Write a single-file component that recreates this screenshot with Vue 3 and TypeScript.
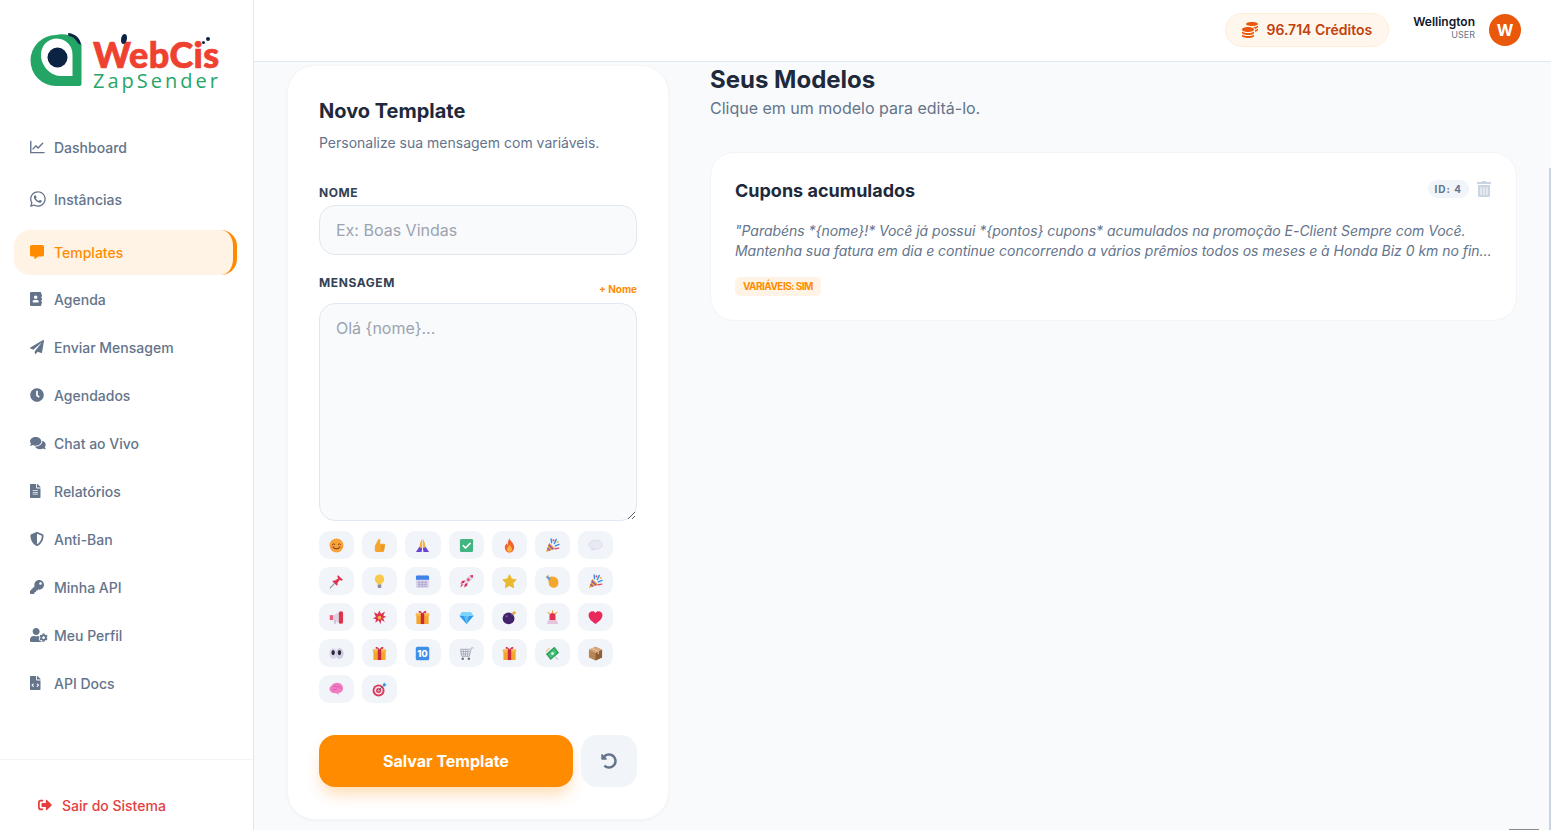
<script setup lang="ts">
interface Icon { vb: string; d: string }
const icons: Record<string, Icon> = {
  whatsapp: { vb: '0 0 448 512', d: 'M380.9 97.1C339 55.1 283.2 32 223.9 32c-122.4 0-222 99.6-222 222 0 39.1 10.2 77.3 29.6 111L0 480l117.7-30.9c32.4 17.7 68.9 27 106.1 27h.1c122.3 0 224.1-99.6 224.1-222 0-59.3-25.2-115-67.1-157zm-157 341.6c-33.2 0-65.7-8.9-94-25.7l-6.7-4-69.8 18.3L72 359.2l-4.4-7c-18.5-29.4-28.2-63.3-28.2-98.2 0-101.7 82.8-184.5 184.6-184.5 49.3 0 95.6 19.2 130.4 54.1 34.8 34.9 56.2 81.2 56.1 130.5 0 101.8-84.9 184.6-186.6 184.6zm101.2-138.2c-5.5-2.8-32.8-16.2-37.9-18-5.1-1.9-8.8-2.8-12.5 2.8-3.7 5.6-14.3 18-17.6 21.8-3.2 3.7-6.5 4.2-12 1.4-32.6-16.3-54-29.1-75.5-66-5.7-9.8 5.7-9.1 16.3-30.3 1.8-3.7.9-6.9-.5-9.7-1.4-2.8-12.5-30.1-17.1-41.2-4.5-10.8-9.1-9.3-12.5-9.5-3.2-.2-6.9-.2-10.6-.2-3.7 0-9.7 1.4-14.8 6.9-5.1 5.6-19.4 19-19.4 46.3 0 27.3 19.9 53.7 22.6 57.4 2.8 3.7 39.1 59.7 94.8 83.8 35.2 15.2 49 16.5 66.6 13.9 10.7-1.6 32.8-13.4 37.4-26.4 4.6-13 4.6-24.1 3.2-26.4-1.3-2.5-5-3.9-10.5-6.6z' },
  comment: { vb: '0 0 512 512', d: 'M448 0H64C28.7 0 0 28.7 0 64v288c0 35.3 28.7 64 64 64h96v84c0 9.8 11.2 15.5 19.1 9.7L304 416h144c35.3 0 64-28.7 64-64V64c0-35.3-28.7-64-64-64z' },
  book: { vb: '0 0 448 512', d: 'M436 160c6.6 0 12-5.4 12-12v-40c0-6.6-5.4-12-12-12h-20V48c0-26.5-21.5-48-48-48H48C21.5 0 0 21.5 0 48v416c0 26.5 21.5 48 48 48h320c26.5 0 48-21.5 48-48v-48h20c6.6 0 12-5.4 12-12v-40c0-6.6-5.4-12-12-12h-20v-64h20c6.6 0 12-5.4 12-12v-40c0-6.6-5.4-12-12-12h-20v-64h20zm-228-32c35.3 0 64 28.7 64 64s-28.7 64-64 64-64-28.7-64-64 28.7-64 64-64zm112 236c0 10.6-10 19.2-22.4 19.2H118.4C106 384 96 375.4 96 364.8v-19.2c0-31.8 30.1-57.6 67.2-57.6h5c12.3 5.1 25.7 8 39.8 8s27.6-2.9 39.8-8h5c37.1 0 67.2 25.8 67.2 57.6v19.2z' },
  plane: { vb: '0 0 512 512', d: 'M476 3.2L12.5 270.6c-18.1 10.4-15.8 35.6 2.2 43.2L121 358.4l287.3-253.2c5.5-4.9 13.3 2.6 8.6 8.3L176 407v80.5c0 23.6 28.5 32.9 42.5 15.8L282 426l124.6 52.2c14.2 6 30.4-2.9 33-18.2l72-432C515 7.8 493.3-6.8 476 3.2z' },
  clock: { vb: '0 0 512 512', d: 'M256,8C119,8,8,119,8,256S119,504,256,504,504,393,504,256,393,8,256,8Zm92.49,313h0l-20,25a16,16,0,0,1-22.49,2.5h0l-67-49.72a40,40,0,0,1-15-31.23V112a16,16,0,0,1,16-16h32a16,16,0,0,1,16,16V256l58,42.5A16,16,0,0,1,348.49,321Z' },
  comments: { vb: '0 0 576 512', d: 'M416 192c0-88.4-93.1-160-208-160S0 103.6 0 192c0 34.3 14.1 65.9 38 92-13.4 30.2-35.5 54.2-35.8 54.5-2.2 2.3-2.8 5.7-1.5 8.7S4.8 352 8 352c36.6 0 66.9-12.3 88.7-25 32.2 15.7 70.3 25 111.3 25 114.9 0 208-71.6 208-160zm122 220c23.9-26 38-57.7 38-92 0-66.9-53.5-124.2-129.3-148.1.9 6.6 1.3 13.3 1.3 20.1 0 105.9-107.7 192-240 192-10.8 0-21.3-.8-31.7-1.9C207.8 439.6 281.8 480 368 480c41 0 79.1-9.2 111.3-25 21.8 12.7 52.1 25 88.7 25 3.2 0 6.1-1.9 7.3-4.8 1.3-2.9.7-6.3-1.5-8.7-.3-.3-22.4-24.2-35.8-54.5z' },
  file: { vb: '0 0 384 512', d: 'M224 136V0H24C10.7 0 0 10.7 0 24v464c0 13.3 10.7 24 24 24h336c13.3 0 24-10.7 24-24V160H248c-13.2 0-24-10.8-24-24zm64 236c0 6.6-5.4 12-12 12H108c-6.6 0-12-5.4-12-12v-8c0-6.6 5.4-12 12-12h168c6.6 0 12 5.4 12 12v8zm0-64c0 6.6-5.4 12-12 12H108c-6.6 0-12-5.4-12-12v-8c0-6.6 5.4-12 12-12h168c6.6 0 12 5.4 12 12v8zm0-72v8c0 6.6-5.4 12-12 12H108c-6.6 0-12-5.4-12-12v-8c0-6.6 5.4-12 12-12h168c6.6 0 12 5.4 12 12zm96-114.1v6.1H256V0h6.1c6.4 0 12.5 2.5 17 7l97.9 98c4.5 4.5 7 10.6 7 16.9z' },
  shield: { vb: '0 0 512 512', d: 'M466.5 83.7l-192-80a48.15 48.15 0 0 0-36.9 0l-192 80C27.7 91.1 16 108.6 16 128c0 198.5 114.5 335.7 221.5 380.3 11.8 4.9 25.1 4.9 36.9 0C360.1 472.6 496 349.3 496 128c0-19.4-11.7-36.9-29.5-44.3zM256.1 446.3l-.1-381 175.9 73.3c-3.3 151.4-82.1 261.1-175.8 307.7z' },
  key: { vb: '0 0 512 512', d: 'M512 176.001C512 273.203 433.202 352 336 352c-11.22 0-22.19-1.062-32.827-3.069l-24.012 27.014A23.999 23.999 0 0 1 261.223 384H224v40c0 13.255-10.745 24-24 24h-40v40c0 13.255-10.745 24-24 24H24c-13.255 0-24-10.745-24-24v-78.059c0-6.365 2.529-12.47 7.029-16.971l161.802-161.802C163.108 213.814 160 195.271 160 176 160 78.798 238.797.001 335.999 0 433.488-.001 512 78.511 512 176.001zM336 128c0 26.51 21.49 48 48 48s48-21.49 48-48-21.49-48-48-48-48 21.49-48 48z' },
  usercog: { vb: '0 0 640 512', d: 'M610.5 373.3c2.6-14.1 2.6-28.5 0-42.6l25.8-14.9c3-1.7 4.3-5.2 3.3-8.5-6.7-21.6-18.2-41.2-33.2-57.4-2.3-2.5-6-3.1-9-1.4l-25.8 14.9c-10.9-9.3-23.4-16.5-36.9-21.3v-29.8c0-3.4-2.4-6.4-5.7-7.1-22.3-5-45-4.8-66.2 0-3.3.7-5.7 3.7-5.7 7.1v29.8c-13.5 4.8-26 12-36.9 21.3l-25.8-14.9c-2.9-1.7-6.7-1.1-9 1.4-15 16.2-26.5 35.8-33.2 57.4-1 3.3.4 6.8 3.3 8.5l25.8 14.9c-2.6 14.1-2.6 28.5 0 42.6l-25.8 14.9c-3 1.7-4.3 5.2-3.3 8.5 6.7 21.6 18.2 41.1 33.2 57.4 2.3 2.5 6 3.1 9 1.4l25.8-14.9c10.9 9.3 23.4 16.5 36.9 21.3v29.8c0 3.4 2.4 6.4 5.7 7.1 22.3 5 45 4.8 66.2 0 3.3-.7 5.7-3.7 5.7-7.1v-29.8c13.5-4.8 26-12 36.9-21.3l25.8 14.9c2.9 1.7 6.7 1.1 9-1.4 15-16.2 26.5-35.8 33.2-57.4 1-3.3-.4-6.8-3.3-8.5l-25.8-14.9zM496 400.5c-26.8 0-48.5-21.8-48.5-48.5s21.8-48.5 48.5-48.5 48.5 21.8 48.5 48.5-21.7 48.5-48.5 48.5zM224 256c70.7 0 128-57.3 128-128S294.7 0 224 0 96 57.3 96 128s57.3 128 128 128zm201.2 226.5c-2.3-1.2-4.6-2.6-6.8-3.9l-7.9 4.6c-6 3.4-12.8 5.3-19.6 5.3-10.9 0-21.4-4.6-28.9-12.6-18.3-19.8-32.3-43.9-40.2-69.6-5.5-17.7 1.9-36.4 17.9-45.7l7.9-4.6c-.1-2.6-.1-5.2 0-7.8l-7.9-4.6c-16-9.2-23.4-28-17.9-45.7.9-2.9 2.2-5.8 3.2-8.7-3.8-.3-7.5-1.2-11.4-1.2h-16.7c-22.2 10.2-46.9 16-72.9 16s-50.6-5.8-72.9-16h-16.7C60.2 288 0 348.2 0 422.4V464c0 26.5 21.5 48 48 48h352c10.1 0 19.5-3.2 27.2-8.5-1.2-3.8-2-7.7-2-11.8v-9.2z' },
  filecode: { vb: '0 0 384 512', d: 'M384 121.941V128H256V0h6.059c6.365 0 12.47 2.529 16.971 7.029l97.941 97.941A24.005 24.005 0 0 1 384 121.941zM248 160c-13.2 0-24-10.8-24-24V0H24C10.745 0 0 10.745 0 24v464c0 13.255 10.745 24 24 24h336c13.255 0 24-10.745 24-24V160H248zM123.206 400.505a5.4 5.4 0 0 1-7.633.246l-64.866-60.812a5.4 5.4 0 0 1 0-7.879l64.866-60.812a5.4 5.4 0 0 1 7.633.246l19.579 20.885a5.4 5.4 0 0 1-.372 7.747L101.65 336l40.763 35.874a5.4 5.4 0 0 1 .372 7.747l-19.579 20.884zm212.087-60.566l-64.866 60.812a5.4 5.4 0 0 1-7.633-.246l-19.58-20.885a5.4 5.4 0 0 1 .372-7.747L284.35 336l-40.763-35.874a5.4 5.4 0 0 1-.372-7.747l19.58-20.885a5.4 5.4 0 0 1 7.633-.246l64.866 60.812a5.4 5.4 0 0 1-.001 7.879z' },
  logout: { vb: '0 0 512 512', d: 'M497 273L329 441c-15 15-41 4.5-41-17v-96H152c-13.3 0-24-10.7-24-24v-96c0-13.3 10.7-24 24-24h136V88c0-21.4 25.9-32 41-17l168 168c9.3 9.4 9.3 24.6 0 34zM192 436v-40c0-6.6-5.4-12-12-12H96c-17.7 0-32-14.3-32-32V160c0-17.7 14.3-32 32-32h84c6.6 0 12-5.4 12-12V76c0-6.6-5.4-12-12-12H96c-53 0-96 43-96 96v192c0 53 43 96 96 96h84c6.6 0 12-5.4 12-12z' },
  coins: { vb: '0 0 512 512', d: 'M0 405.3V448c0 35.3 86 64 192 64s192-28.7 192-64v-42.7C342.7 434.4 267.2 448 192 448S41.3 434.4 0 405.3zM320 128c106 0 192-28.7 192-64S426 0 320 0 128 28.7 128 64s86 64 192 64zM0 300.4V352c0 35.3 86 64 192 64s192-28.7 192-64v-51.6c-41.3 34-116.9 51.6-192 51.6S41.3 334.4 0 300.4zm416 11c57.3-11.1 96-31.7 96-55.4v-42.7c-23.2 16.4-57.3 27.6-96 34.5v63.6zM192 160C86 160 0 195.8 0 240s86 80 192 80 192-35.8 192-80-86-80-192-80zm219.3 56.3c60-10.8 100.7-32 100.7-56.3v-42.7c-35.5 25.1-96.5 38.6-160.7 41.8 29.5 14.3 51.2 33.5 60 57.2z' },
  trash: { vb: '0 0 448 512', d: 'M32 464a48 48 0 0 0 48 48h288a48 48 0 0 0 48-48V128H32zm272-256a16 16 0 0 1 32 0v224a16 16 0 0 1-32 0zm-96 0a16 16 0 0 1 32 0v224a16 16 0 0 1-32 0zm-96 0a16 16 0 0 1 32 0v224a16 16 0 0 1-32 0zM432 32H312l-9.4-18.7A24 24 0 0 0 281.1 0H166.8a23.72 23.72 0 0 0-21.4 13.3L136 32H16A16 16 0 0 0 0 48v32a16 16 0 0 0 16 16h416a16 16 0 0 0 16-16V48a16 16 0 0 0-16-16z' },
  undo: { vb: '0 0 512 512', d: 'M255.545 8c-66.269.119-126.438 26.233-170.86 68.685L48.971 40.971C33.851 25.851 8 36.559 8 57.941V192c0 13.255 10.745 24 24 24h134.059c21.382 0 32.09-25.851 16.971-40.971l-41.75-41.75c30.864-28.899 70.801-44.907 113.23-45.273 92.398-.798 170.283 73.977 169.484 169.442C423.236 348.009 349.816 424 256 424c-41.127 0-79.997-14.678-110.63-41.556-4.743-4.161-11.906-3.908-16.368.553L89.34 422.659c-4.872 4.872-4.631 12.815.482 17.433C133.798 479.813 192.074 504 256 504c136.966 0 247.999-111.033 248-247.998C504.001 119.193 392.354 7.755 255.545 8z' },
}
const nav = [
  { label: 'Dashboard', icon: 'chart', wide: true },
  { label: 'Instâncias', icon: 'whatsapp', wide: true, size: 18 },
  { label: 'Templates', icon: 'comment', active: true },
  { label: 'Agenda', icon: 'book' },
  { label: 'Enviar Mensagem', icon: 'plane' },
  { label: 'Agendados', icon: 'clock' },
  { label: 'Chat ao Vivo', icon: 'comments' },
  { label: 'Relatórios', icon: 'file' },
  { label: 'Anti-Ban', icon: 'shield' },
  { label: 'Minha API', icon: 'key' },
  { label: 'Meu Perfil', icon: 'usercog' },
  { label: 'API Docs', icon: 'filecode' },
]
const gift = '<rect x="1.5" y="5" width="13" height="10" rx="1" fill="#f5a52b"/><rect x=".8" y="3.4" width="14.4" height="3.2" rx=".6" fill="#f7b84a"/><rect x="6.2" y="3.4" width="3.6" height="11.6" fill="#c9283e"/><path d="M8 3.4C6 .6 3.6.6 3.8 2.200 4 3.400 6 3.400 8 3.400zM8 3.400c2-2.800 4.400-2.800 4.200-1.200C12 3.400 10 3.400 8 3.400z" fill="#d8344c"/>'
const party = '<path d="M1 15 4.500 5l6.500 6.500z" fill="#e8a13a"/><path d="M2.600 10.800l2.600 2.700M3.900 7.200l4.900 4.900" stroke="#8a4fc4" stroke-width="1.400"/><path d="M7 5 6.500 1M10 6l2-4.500M11 8.500l4-1.700" stroke="#3e8ee8" stroke-width="1.500" stroke-linecap="round"/><circle cx="9" cy="2.500" r="1.100" fill="#e8456b"/><circle cx="13.500" cy="4.200" r="1.100" fill="#f2b632"/><path d="M11 11.500l3.700-.7" stroke="#e8456b" stroke-width="1.500" stroke-linecap="round"/>'
const emojis: string[] = [
  '<circle cx="8" cy="8" r="7.4" fill="#f7a23b"/><path d="M3.8 6.8q1.2-1.500 2.400 0M9.800 6.800q1.200-1.500 2.400 0" stroke="#7a3a14" stroke-width="1" fill="none" stroke-linecap="round"/><path d="M4.500 9.700q3.500 3.600 7 0" stroke="#7a3a14" stroke-width="1.100" fill="none" stroke-linecap="round"/><circle cx="3.700" cy="9.300" r="1.200" fill="#f0734a" opacity=".7"/><circle cx="12.300" cy="9.300" r="1.200" fill="#f0734a" opacity=".7"/>',
  '<path d="M3 8.500 7 1c1.800-.3 2.300 1 1.900 2.600L8.500 6H12.500c1.200 0 1.700 1 1.400 2l-1 5.800c-.2.800-.8 1.200-1.600 1.200H5c-1.200 0-2-1-2-2z" fill="#f4a62e"/><path d="M9.500 8.500h4M9.500 10.500h3.800M9.500 12.500h3.200" stroke="#d9801b" stroke-width=".7"/>',
  '<path d="M7.600 1C6 2.500 5 7 4.500 10l3.100 1zM8.400 1C10 2.500 11 7 11.500 10l-3.100 1z" fill="#f5b041"/><path d="M4.500 9.500 1 15h6l.6-4zM11.500 9.500 15 15H9l-.6-4z" fill="#6a45d1"/>',
  '<rect x="1" y="1" width="14" height="14" rx="1.500" fill="#43b581"/><path d="M4.500 8.200 7 10.700l4.800-5" stroke="#fff" stroke-width="1.700" fill="none" stroke-linecap="round" stroke-linejoin="round"/>',
  '<path d="M8 .5c.6 2.600 5 4.800 5 9.300 0 3.200-2.200 5.700-5 5.700s-5-2.500-5-5.700c0-2 1.200-3.400 2-4.300.1 1 .5 1.600 1.100 1.900C6 4.700 6.800 2.200 8 .5z" fill="#f2622e"/><path d="M8 7c.4 1.500 2.800 2.500 2.800 5 0 1.700-1.200 3-2.800 3s-2.800-1.300-2.800-3C5.200 10 7.500 8.700 8 7z" fill="#fbb03b"/>',
  party,
  '<ellipse cx="8" cy="7.200" rx="7.200" ry="5" fill="#e9e9f4" stroke="#cfcfe0" stroke-width=".6"/><path d="M4.500 10.500 3.500 14.500l4-3z" fill="#dcdcea"/>',
  '<path d="M9.500 1 15 6.500 13 7.200 11.500 6 9 9.500c.4 1.500 0 2.500-.6 3L3.500 7.600c.6-.6 1.700-1 3-.6L10 4.500 8.800 3.200z" fill="#e0314f"/><path d="M6 10 1.300 14.700" stroke="#8a94a6" stroke-width="1.200" stroke-linecap="round"/>',
  '<path d="M8 .5a5 5 0 0 0-2.800 9.100c.6.500.8 1 .8 1.800h4c0-.8.200-1.300.8-1.800A5 5 0 0 0 8 .5z" fill="#fbc94a"/><rect x="6.100" y="11.300" width="3.800" height="3.700" rx=".8" fill="#8d8da3"/>',
  '<rect x="1" y="1.500" width="14" height="13.500" rx="1.500" fill="#dcd6ee"/><path d="M2.500 1.500h11A1.500 1.500 0 0 1 15 3v3H1V3a1.500 1.500 0 0 1 1.500-1.500z" fill="#3f83e8"/><path d="M4.500 7.500v6M8 7.500v6M11.500 7.500v6M3 9h10M3 11h10M3 13h10" stroke="#9b90b8" stroke-width=".9" stroke-dasharray="1 .7"/>',
  '<path d="M15 1c-3.700.2-7 2.200-8.800 6.300L8.700 9.800C12.800 8 14.800 4.700 15 1z" fill="#dccde2"/><path d="M15 1c-1.300 0-2.500.3-3.500.7l2.800 2.800c.4-1 .7-2.200.7-3.500z" fill="#e0314f"/><circle cx="10" cy="6" r="1.300" fill="#e0314f"/><path d="M6.500 6.800 3.500 7.300 1.500 10.500l4-.8zM9.200 9.500l-.5 3-3.200 2 .8-4zM5 11 1.500 14.500l.8-3.300z" fill="#d92d5e"/>',
  '<path d="m8 .8 2.200 4.500 5 .8-3.600 3.500.8 5L8 12.200l-4.400 2.400.8-5L.8 6.100l5-.8z" fill="#e9b92e" stroke="#e9b92e" stroke-linejoin="round"/>',
  '<path d="M3.500 4c3-2.200 8-1.400 10 1.800 1.700 3.200.6 7.400-2.400 8.600-3.100 1-6-.5-7-3.500z" fill="#f5a62e"/><path d="M2.800 1.300 6 5.300 4.500 7.300 1 3.500z" fill="#5aa7e8"/><path d="M2.500 .8 4 2.300M.8 2.800 2.300 3.800" stroke="#f5a62e" stroke-width=".8"/>',
  party,
  '<rect x=".8" y="5.500" width="3.700" height="5.200" fill="#ef5d7d"/><path d="M4.500 5.500 11 2v12l-6.500-3.300z" fill="#dcd3e4"/><rect x="10.500" y="1.300" width="4.500" height="13.400" rx="2" fill="#e0314f"/><path d="M5 10.700h2l.8 4H5.800z" fill="#c7c1d4"/>',
  '<path d="m8 .5 1.500 3.800L14 1.600l-2 4.200 3.300 1.700-3.500 1 1.700 4.400-3.500-2.400-1 4.700-1.900-4.200-3.600 2.700.8-4L.8 9l3.300-1.800L2 2.500l4.100 1.700z" fill="#e0314f"/><circle cx="8" cy="8" r="2" fill="#f6b648"/>',
  gift,
  '<path d="M3.800 2h8.400L15.500 6.500 8 15 .5 6.500z" fill="#2f9be8"/><path d="M5.500 6.500 8 15l2.500-8.500z" fill="#5cc1f5"/><path d="M3.800 2h8.400l3.300 4.500H.5z" fill="#7ed4f8"/>',
  '<circle cx="7" cy="9" r="6.300" fill="#43226d"/><circle cx="5" cy="6.700" r="1.200" fill="#7a5aa8"/><path d="m10.500 5 1.500-1.500" stroke="#8a8aa0" stroke-width="1.600"/><circle cx="13" cy="3" r="1.800" fill="#f5a62e"/>',
  '<path d="M4.800 6.500a3.200 3.200 0 0 1 6.400 0V11H4.800z" fill="#e0314f"/><path d="M3.300 11h9.400l1.300 4H2z" fill="#e6c4de"/><path d="M8 .8v2.200M3.300 2.500 5 4.200M12.700 2.500 11 4.200" stroke="#f2a23a" stroke-width="1.100" stroke-linecap="round"/>',
  '<path d="M8 15C2.800 11.300.6 8.500.6 5.600.6 3 2.600 1.300 4.800 1.300 6.100 1.300 7.300 2 8 3.200c.7-1.200 1.900-1.900 3.200-1.900 2.200 0 4.200 1.700 4.200 4.300 0 2.900-2.200 5.700-7.400 9.400z" fill="#e9285b"/>',
  '<ellipse cx="4.600" cy="8" rx="4.200" ry="5.800" fill="#ddd8ea"/><ellipse cx="11.400" cy="8" rx="4.200" ry="5.800" fill="#d2cde2"/><ellipse cx="4.400" cy="7" rx="1.800" ry="2.800" fill="#2a2a3a"/><ellipse cx="11.200" cy="7" rx="1.800" ry="2.800" fill="#2a2a3a"/>',
  gift,
  '<rect x=".8" y=".8" width="14.400" height="14.400" rx="2" fill="#3f8fe8"/><text x="8" y="11.800" text-anchor="middle" font-family="Inter, sans-serif" font-weight="800" font-size="10" fill="#fff">10</text>',
  '<path d="M1 3.500h11M1 6h11M1.500 8.500h10M2 3.500 3 11h8l2.200-9H15.500" stroke="#a3a3b5" stroke-width=".9" fill="none"/><path d="M4.500 3.500 5.200 11M7 3.500V11M9.500 3.500 9 11" stroke="#a3a3b5" stroke-width=".8"/><circle cx="4" cy="13.500" r="1.300" fill="#6b6b80"/><circle cx="10.500" cy="13.500" r="1.300" fill="#6b6b80"/>',
  gift,
  '<path d="M1 8.500 10 .8l5 6.500L6 15z" fill="#2e9e5b"/><path d="M3 9 9.800 3l3.200 4L6.300 13z" fill="#48c078"/><circle cx="8" cy="8" r="1.500" fill="#d6f5dc"/><path d="M1 6 5 2" stroke="#e8c98a" stroke-width="1.500"/><path d="M11 11.500l3 3" stroke="#c8c8d6" stroke-width="1.300"/>',
  '<path d="M8 .7 15 4v8.300L8 15.500 1 12.300V4z" fill="#b98554"/><path d="M8 7.500 15 4v8.300L8 15.500z" fill="#8f6038"/><path d="M8 .7 15 4 8 7.500 1 4z" fill="#d4a679"/><path d="M4.500 2.400 11 6v2.500" stroke="#e7cda9" stroke-width="1" fill="none"/>',
  '<path d="M3 3.500c1.500-2.600 6.500-3.800 9.500-1.600 3 2 3.200 6.200 1 8.500-1 1-2.800 1.300-3.800 1.300l1.500 2.100-3.700-1.700C4.500 12.300.5 10.700.5 7.500.5 5.800 2 4.500 3 3.500z" fill="#f17cc2"/><path d="M5 5c1.500-1 3-.5 3.500 1M9 4.500c1.500-.5 3 .5 3 2.500M4 8c1.500.5 3 .5 4-.5" stroke="#c94d9c" stroke-width=".8" fill="none"/>',
  '<circle cx="7" cy="9" r="6.400" fill="#d93d5e"/><circle cx="7" cy="9" r="4.400" fill="#efdde8"/><circle cx="7" cy="9" r="2.700" fill="#d93d5e"/><circle cx="7" cy="9" r="1" fill="#efdde8"/><path d="M7 9 12.500 3.500" stroke="#5a6078" stroke-width="1"/><path d="M11.500 2.500 13.500.5 14 2.300l1.800.4-2.100 2-1.700-.4z" fill="#3f8fe8"/>',
]
</script>

<template>
  <div class="app">
    <aside class="sidebar">
      <div class="logo">
        <svg class="pin" viewBox="0 0 52 55" width="52" height="55">
          <path d="M26 3A25.500 25.500 0 0 0 .5 28.500 25.500 25.500 0 0 0 26 54H49a2.500 2.500 0 0 0 2.500-2.500V12A25 25 0 0 0 26 3z" fill="#22a565" />
          <path d="M27 6.500A16 16 0 0 0 11 23C11 34.500 21 43.500 30 44H42.500V22.500A16 16 0 0 0 27 6.500z" fill="#fff" />
          <circle cx="27.500" cy="25.500" r="10" fill="#0d2344" />
          <path d="M38 1c6 0 12.500 5 13 11.500-2 0-3-1-3.800-2.500C45 6 41.500 4 38.500 4z" fill="#0d2344" />
        </svg>
        <div class="brand">
          <div class="brand-top">WebCis<i class="drop" /><i class="dot" /><i class="dot two" /></div>
          <div class="brand-sub">ZapSender</div>
        </div>
      </div>
      <nav class="nav">
        <a v-for="item in nav" :key="item.label" class="nav-item" :class="{ active: item.active, wide: item.wide }">
          <span class="nav-ico">
            <svg v-if="item.icon === 'chart'" viewBox="0 0 16 14" width="15" height="14">
              <path d="M.8 1v12h14.200" stroke="currentColor" stroke-width="1.500" fill="none" stroke-linecap="round" />
              <path d="M3.200 9 6.200 5.800 8.700 8 13.500 3" stroke="currentColor" stroke-width="1.500" fill="none" stroke-linecap="round" stroke-linejoin="round" />
            </svg>
            <svg v-else :viewBox="icons[item.icon].vb" :height="item.size || 14" fill="currentColor"><path :d="icons[item.icon].d" /></svg>
          </span>
          <span>{{ item.label }}</span>
        </a>
      </nav>
      <div class="side-foot">
        <a class="logout">
          <svg :viewBox="icons.logout.vb" width="14" height="14" fill="currentColor"><path :d="icons.logout.d" /></svg>
          <span>Sair do Sistema</span>
        </a>
      </div>
    </aside>

    <div class="main">
      <header class="topbar">
        <div class="credits">
          <svg :viewBox="icons.coins.vb" width="16" height="16" fill="#ea580c"><path :d="icons.coins.d" /></svg>
          <span>96.714 Créditos</span>
        </div>
        <div class="user">
          <div class="user-text">
            <div class="user-name">Wellington</div>
            <div class="user-role">USER</div>
          </div>
          <div class="avatar">W</div>
        </div>
      </header>

      <div class="content">
        <section class="form-card">
          <h2 class="form-title">Novo Template</h2>
          <p class="form-sub">Personalize sua mensagem com variáveis.</p>
          <label class="label">NOME</label>
          <input class="input" placeholder="Ex: Boas Vindas" />
          <div class="msg-row">
            <label class="label msg-label">MENSAGEM</label>
            <span class="add-var">+ Nome</span>
          </div>
          <textarea class="textarea" placeholder="Olá {nome}..."></textarea>
          <div class="emoji-grid">
            <button v-for="(e, i) in emojis" :key="i" class="emoji" type="button">
              <svg viewBox="0 0 16 16" width="15" height="15" v-html="e"></svg>
            </button>
          </div>
          <div class="actions">
            <button class="save" type="button">Salvar Template</button>
            <button class="reset" type="button">
              <svg :viewBox="icons.undo.vb" width="16" height="16" fill="#64748b"><path :d="icons.undo.d" /></svg>
            </button>
          </div>
        </section>

        <section class="models">
          <h1 class="models-title">Seus Modelos</h1>
          <p class="models-sub">Clique em um modelo para editá-lo.</p>
          <article class="model">
            <div class="model-head">
              <h3 class="model-name">Cupons acumulados</h3>
              <div class="model-tools">
                <span class="id-pill">ID: 4</span>
                <svg :viewBox="icons.trash.vb" width="14" height="16" fill="#cbd5e1"><path :d="icons.trash.d" /></svg>
              </div>
            </div>
            <div class="model-body">
              <p class="body-line">"Parabéns *{nome}!* Você já possui *{pontos} cupons* acumulados na promoção E-Client Sempre com Você.</p>
              <p class="body-line">Mantenha sua fatura em dia e continue concorrendo a vários prêmios todos os meses e à Honda Biz 0 km no final do ano, participe e boa sorte!"</p>
            </div>
            <span class="badge">VARIÁVEIS: SIM</span>
          </article>
        </section>
      </div>
    </div>

    <i class="scroll-thumb" />
    <i class="scroll-corner" />
  </div>
</template>

<style>
html, body { margin: 0; padding: 0; overflow: hidden; }
</style>

<style scoped>
* { box-sizing: border-box; }
.app {
  position: relative;
  display: flex;
  width: 100%;
  height: 100vh;
  overflow: hidden;
  background: #f8fafc;
  font-family: Inter, "Liberation Sans", sans-serif;
  color: #1e293b;
}
.sidebar {
  width: 254px;
  flex: none;
  display: flex;
  flex-direction: column;
  background: #fff;
  border-right: 1px solid #e2e8f0;
}
.logo {
  display: flex;
  align-items: flex-start;
  gap: 11px;
  height: 125px;
  padding: 32px 0 0 30px;
}
.pin { display: block; flex: none; }
.brand { position: relative; display: flex; flex-direction: column; }
.brand-top {
  position: relative;
  font-family: Lato, sans-serif;
  font-weight: 900;
  font-size: 36px;
  line-height: 34px;
  letter-spacing: .3px;
  color: #ef4130;
  -webkit-text-stroke: .7px #ef4130;
  margin-top: 5px;
}
.drop {
  position: absolute; left: 28px; top: -3px; width: 6px; height: 10px;
  border-radius: 60% 40% 60% 40%; background: #0d2344;
}
.dot { position: absolute; left: 113px; top: 0; width: 4px; height: 4px; border-radius: 50%; background: #0d2344; }
.dot.two { left: 109px; top: 4px; width: 3px; height: 3px; }
.brand-sub {
  font-family: "Open Sans", sans-serif;
  font-weight: 500;
  font-size: 20px;
  line-height: 20px;
  letter-spacing: 3px;
  color: #27a567;
}
.nav { flex: 1; display: flex; flex-direction: column; padding: 0 16px 0 14px; }
.nav-item {
  display: flex;
  align-items: center;
  flex: none;
  height: 44px;
  margin-bottom: 4px;
  padding-left: 16px;
  font-size: 14px;
  font-weight: 500;
  color: #64748b;
  border-radius: 16px;
}
.nav-item.wide { margin-bottom: 8px; }
.nav-item.active {
  height: 45px;
  margin-top: 1px;
  margin-bottom: 2px;
  padding-bottom: 1px;
  color: #ff8c00;
  background: #fff3e6;
  border-right: 4px solid #ff8c00;
}
.nav-ico { width: 24px; flex: none; display: flex; align-items: center; }
.nav-ico svg { display: block; }
.side-foot { height: 71px; border-top: 1px solid #f1f5f9; padding: 35px 0 0 38px; }
.logout {
  display: flex;
  align-items: center;
  gap: 10px;
  height: 20px;
  font-size: 14px;
  font-weight: 500;
  color: #e53e3e;
}
.main { flex: 1; min-width: 0; display: flex; flex-direction: column; }
.topbar {
  height: 62px;
  flex: none;
  display: flex;
  justify-content: flex-end;
  align-items: center;
  gap: 24px;
  padding: 0 30px 2px 0;
  background: #fff;
  border-bottom: 1px solid #e2e8f0;
}
.credits {
  display: flex;
  align-items: center;
  gap: 8px;
  height: 34px;
  padding: 0 16px;
  border-radius: 17px;
  background: #fff7ed;
  border: 1px solid #ffedd5;
  color: #c2410c;
  font-size: 14px;
  font-weight: 600;
}
.user { display: flex; align-items: center; gap: 14px; }
.user-text { text-align: right; margin-bottom: 4px; }
.user-name { font-size: 12px; line-height: 15px; font-weight: 600; color: #0f172a; }
.user-role { font-size: 9px; line-height: 12px; color: #64748b; }
.avatar {
  width: 32px; height: 32px; border-radius: 50%;
  background: #ea580c; color: #fff;
  display: flex; align-items: center; justify-content: center;
  font-size: 16px; font-weight: 700;
}
.content {
  flex: 1;
  min-height: 0;
  display: grid;
  grid-template-columns: 382px minmax(0, 1fr);
  column-gap: 41px;
  align-items: start;
  padding: 3px 34px 0 33px;
}
.form-card {
  background: #fff;
  border: 1px solid #f4f6f9;
  border-radius: 28px;
  padding: 31px 31px 32px;
  box-shadow: 0 1px 3px rgba(15, 23, 42, .04);
}
.form-title { margin: 0; font-size: 20px; line-height: 28px; font-weight: 700; color: #1e293b; }
.form-sub { margin: 8px 0 32px; font-size: 14px; line-height: 20px; color: #64748b; }
.label {
  display: block;
  margin-bottom: 4px;
  font-size: 12px;
  line-height: 16px;
  font-weight: 700;
  letter-spacing: .6px;
  color: #334155;
}
.input {
  display: block;
  width: 100%;
  height: 50px;
  margin-bottom: 20px;
  padding: 0 16px;
  font: 400 16px Inter, sans-serif;
  color: #1e293b;
  background: #f8fafc;
  border: 1px solid #e2e8f0;
  border-radius: 16px;
  outline: none;
}
.input::placeholder, .textarea::placeholder { color: #9ca3af; opacity: 1; }
.msg-row { display: flex; justify-content: space-between; align-items: flex-end; margin-bottom: 6px; }
.msg-label { margin-bottom: 6px; }
.add-var { font-size: 10px; line-height: 15px; font-weight: 700; color: #ff8c00; }
.textarea {
  display: block;
  width: 100%;
  height: 218px;
  padding: 14px 16px;
  font: 400 16px/20px Inter, sans-serif;
  background: #f8fafc;
  border: 1px solid #e2e8f0;
  border-radius: 16px;
  outline: none;
  resize: vertical;
}
.emoji-grid { display: flex; flex-wrap: wrap; gap: 8px; margin-top: 10px; }
.emoji {
  width: 35.2px;
  height: 28px;
  padding: 0;
  border: 0;
  border-radius: 10px;
  background: #f1f5f9;
  display: flex;
  align-items: center;
  justify-content: center;
}
.emoji svg { display: block; }
.actions { display: flex; gap: 8px; margin-top: 32px; }
.save {
  flex: 1;
  height: 52px;
  border: 0;
  border-radius: 16px;
  background: #ff8c00;
  color: #fff;
  font: 700 16px Inter, sans-serif;
  box-shadow: 0 10px 15px -3px rgba(255, 140, 0, .3);
}
.reset {
  width: 56px;
  height: 52px;
  border: 0;
  border-radius: 16px;
  background: #f1f5f9;
  display: flex;
  align-items: center;
  justify-content: center;
}
.models-title { margin: 0; font-size: 24px; line-height: 30px; font-weight: 700; color: #1e293b; }
.models-sub { margin: 1px 0 32px; font-size: 16px; line-height: 24px; color: #64748b; }
.model {
  background: #fff;
  border: 1px solid #f1f5f9;
  border-radius: 24px;
  padding: 24px 24px 23px;
}
.model-head { display: flex; justify-content: space-between; align-items: flex-start; height: 28px; }
.model-name { margin: 0; font-size: 18px; line-height: 28px; font-weight: 700; color: #1e293b; }
.model-tools { display: flex; align-items: center; gap: 8px; margin-top: 3px; margin-right: 1px; }
.id-pill {
  display: block;
  height: 18px;
  padding: 0 7px;
  border-radius: 9px;
  background: #f1f5f9;
  font-size: 10px;
  line-height: 18px;
  font-weight: 700;
  letter-spacing: 1px;
  color: #64748b;
}
.model-body { margin: 16px 0; }
.body-line {
  margin: 0;
  font-size: 14px;
  line-height: 20px;
  font-style: italic;
  letter-spacing: -.03px;
  color: #64748b;
  white-space: nowrap;
  overflow: hidden;
  text-overflow: ellipsis;
}
.badge {
  display: inline-block;
  height: 19px;
  padding: 0 8px;
  border-radius: 5px;
  background: #fff3e6;
  font-size: 10px;
  line-height: 19px;
  font-weight: 700;
  letter-spacing: -.55px;
  color: #ff8c00;
  vertical-align: top;
}
.scroll-thumb { position: absolute; right: 0; top: 168px; bottom: 0; width: 2px; background: #cbd5e1; }
.scroll-corner { position: absolute; left: 1509px; bottom: 0; width: 30px; height: 1px; background: #8a8a8a; }
</style>
